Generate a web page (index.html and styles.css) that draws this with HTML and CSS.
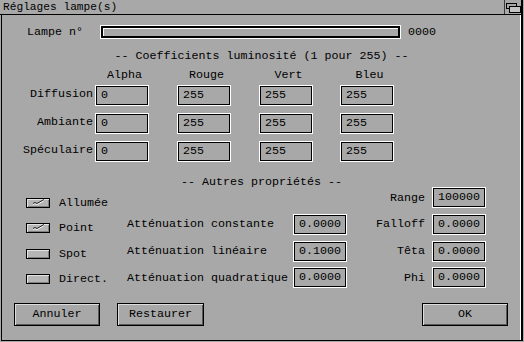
FILE: index.html
```html
<!DOCTYPE html>
<html lang="fr">
<head>
    <meta charset="UTF-8">
    <title>Réglages lampe(s)</title>
    <link rel="stylesheet" href="styles.css">
</head>
<body>
    <div class="window">
        <div class="titlebar">
            <span class="title">Réglages lampe(s)</span>
            <span class="winbtn">
                <svg width="16" height="14" viewBox="0 0 16 14">
                    <rect x="1.5" y="3.5" width="10" height="5" fill="none" stroke="#000"/>
                    <rect x="4.5" y="6.5" width="11" height="6" fill="#c4c4c4" stroke="#000"/>
                </svg>
            </span>
        </div>

        <div class="panel">
            <!-- Lamp selector -->
            <div class="lamp-row">
                <span class="lamp-label">Lampe n°</span>
                <div class="slider"><div class="slider-track"></div></div>
                <span class="lamp-num">0000</span>
            </div>

            <div class="section-title coef-title">-- Coefficients luminosité (1 pour 255) --</div>

            <div class="coef-head">
                <span></span>
                <span class="head">Alpha</span>
                <span class="head">Rouge</span>
                <span class="head">Vert</span>
                <span class="head">Bleu</span>
            </div>
            <div class="coef-grid">
                <span class="row-label">Diffusion</span>
                <div class="field">0</div>
                <div class="field">255</div>
                <div class="field">255</div>
                <div class="field">255</div>

                <span class="row-label">Ambiante</span>
                <div class="field">0</div>
                <div class="field">255</div>
                <div class="field">255</div>
                <div class="field">255</div>

                <span class="row-label">Spéculaire</span>
                <div class="field">0</div>
                <div class="field">255</div>
                <div class="field">255</div>
                <div class="field">255</div>
            </div>

            <div class="section-title other-title">-- Autres propriétés --</div>

            <div class="props">
                <div class="checks">
                    <div class="check-item">
                        <span class="check"><svg width="22" height="8" viewBox="0 0 22 8"><path d="M6 5.5 L8 4.5 L10 5.5 L17 1.5" fill="none" stroke="#fff" stroke-width="1"/><path d="M6 4.5 L8 3.5 L10 4.5 L17 0.5" fill="none" stroke="#222" stroke-width="1"/></svg></span>
                        <span class="check-label">Allumée</span>
                    </div>
                    <div class="check-item">
                        <span class="check"><svg width="22" height="8" viewBox="0 0 22 8"><path d="M6 5.5 L8 4.5 L10 5.5 L17 1.5" fill="none" stroke="#fff" stroke-width="1"/><path d="M6 4.5 L8 3.5 L10 4.5 L17 0.5" fill="none" stroke="#222" stroke-width="1"/></svg></span>
                        <span class="check-label">Point</span>
                    </div>
                    <div class="check-item">
                        <span class="check"></span>
                        <span class="check-label">Spot</span>
                    </div>
                    <div class="check-item">
                        <span class="check"></span>
                        <span class="check-label">Direct.</span>
                    </div>
                </div>

                <span></span>
                <span></span>
                <span class="side-label">Range</span>
                <div class="field">100000</div>

                <span class="att-label">Atténuation constante</span>
                <div class="field">0.0000</div>
                <span class="side-label">Falloff</span>
                <div class="field">0.0000</div>

                <span class="att-label">Atténuation linéaire</span>
                <div class="field">0.1000</div>
                <span class="side-label">Têta</span>
                <div class="field">0.0000</div>

                <span class="att-label">Atténuation quadratique</span>
                <div class="field">0.0000</div>
                <span class="side-label">Phi</span>
                <div class="field">0.0000</div>
            </div>

            <div class="buttons">
                <button class="btn">Annuler</button>
                <button class="btn btn-restore">Restaurer</button>
                <button class="btn btn-ok">OK</button>
            </div>
        </div>
    </div>
</body>
</html>
```

FILE: styles.css
```css
* {
    box-sizing: border-box;
}
body {
    margin: 0;
    background: #a8a8a8;
    font-family: "Liberation Mono", "DejaVu Sans Mono", monospace;
    font-size: 11.67px;
    color: #000;
}
.window {
    width: 523px;
    height: 341px;
    border-right: 2px solid #000;
    display: flex;
    flex-direction: column;
}
.titlebar {
    height: 15px;
    border-bottom: 1px solid #000;
    display: flex;
    align-items: center;
}
.title {
    flex: 1;
    padding-left: 3px;
    font-size: 11.2px;
    line-height: 14px;
}
.winbtn {
    width: 17px;
    height: 14px;
    border-left: 1px solid #3a3a3a;
    display: flex;
}
.panel {
    flex: 1;
    margin-left: 1px;
    border-left: 1px solid #000;
    border-bottom: 1px solid #000;
    box-shadow: inset -1px 0 0 #fff;
    display: flex;
    flex-direction: column;
}

/* lamp selector */
.lamp-row {
    margin-top: 10px;
    height: 14px;
    padding-left: 25px;
    display: flex;
    align-items: center;
}
.lamp-label {
    width: 56px;
    line-height: 14px;
}
.slider {
    margin-left: 17px;
    width: 301px;
    height: 14px;
    border: 1px solid #fff;
}
.slider-track {
    height: 100%;
    border: 2px solid #000;
    box-shadow: inset 1px 1px 0 #fff;
}
.lamp-num {
    margin-left: 7px;
    line-height: 14px;
}

.section-title {
    text-align: center;
    line-height: 14px;
    white-space: pre;
}
.coef-title {
    margin-top: 10px;
}

/* coefficient table */
.coef-head, .coef-grid {
    display: grid;
    grid-template-columns: 93px 82px 82px 81px 54px;
}
.coef-head {
    margin-top: 5px;
    line-height: 14px;
}
.head {
    width: 54px;
    padding-left: 5px;
    text-align: center;
}
.coef-grid {
    margin-top: 3px;
    grid-template-rows: repeat(3, 21px);
    row-gap: 7px;
}
.row-label {
    align-self: center;
    text-align: right;
    padding-right: 2px;
    margin-bottom: 3px;
    line-height: 14px;
}
.field {
    width: 54px;
    height: 21px;
    border: 1px solid #fff;
    box-shadow: inset 0 0 0 1px #000;
    padding-left: 5px;
    line-height: 19px;
    white-space: pre;
}

.other-title {
    margin-top: 13px;
}

/* other properties */
.props {
    margin-top: -2px;
    margin-left: 24px;
    display: grid;
    grid-template-columns: 101px 166px 54px 85px 54px;
    grid-template-rows: repeat(4, 21px);
    row-gap: 5.8px;
}
.checks {
    grid-row: 1 / span 4;
    padding-top: 8.5px;
    display: flex;
    flex-direction: column;
    gap: 11.5px;
}
.check-item {
    height: 14px;
    display: flex;
    align-items: center;
}
.check {
    width: 24px;
    height: 10px;
    border: 1px solid #000;
    background: #b6b6b6;
    box-shadow: inset 1px 1px 0 #e4e4e4, inset -1px -1px 0 #808080;
    display: flex;
}
.check-label {
    margin-left: 9px;
    line-height: 14px;
}
.att-label, .side-label {
    align-self: center;
    line-height: 14px;
    white-space: nowrap;
}
.side-label {
    text-align: right;
    padding-right: 7px;
}

/* buttons */
.buttons {
    margin-top: 14.6px;
    padding: 0 13px 0 12px;
    display: flex;
}
.btn {
    width: 86px;
    height: 23px;
    padding: 0;
    border: 1px solid #000;
    background: #a8a8a8;
    box-shadow: inset 1px 1px 0 #dcdcdc, inset -1px -1px 0 #5a5a5a;
    font-family: inherit;
    font-size: 11.67px;
    color: #000;
}
.btn-restore {
    margin-left: 17px;
    width: 87px;
}
.btn-ok {
    margin-left: auto;
}
```
